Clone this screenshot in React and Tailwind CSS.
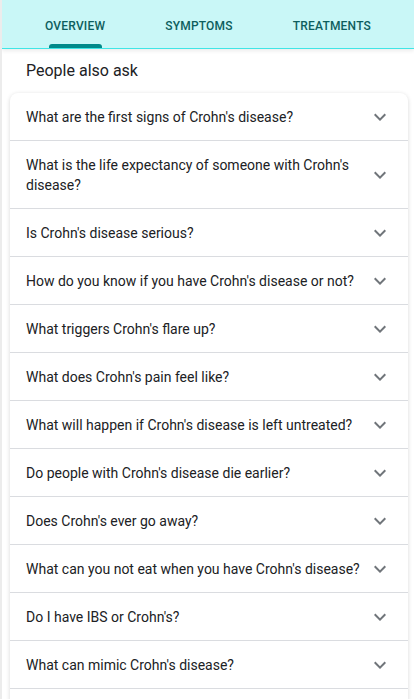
import React from "react";

const questions = [
  "What are the first signs of Crohn's disease?",
  "What is the life expectancy of someone with Crohn's disease?",
  "Is Crohn's disease serious?",
  "How do you know if you have Crohn's disease or not?",
  "What triggers Crohn's flare up?",
  "What does Crohn's pain feel like?",
  "What will happen if Crohn's disease is left untreated?",
  "Do people with Crohn's disease die earlier?",
  "Does Crohn's ever go away?",
  "What can you not eat when you have Crohn's disease?",
  "Do I have IBS or Crohn's?",
  "What can mimic Crohn's disease?",
  "Can Crohn's disease be cured?",
];

function Chevron() {
  return (
    <svg width="24" height="20" viewBox="0 2 24 20" className="shrink-0 fill-[#70757a]">
      <path d="M16.59 8.59L12 13.17 7.41 8.59 6 10l6 6 6-6z" />
    </svg>
  );
}

export default function App() {
  return (
    <div className="min-h-screen bg-white font-['Roboto',_'Liberation_Sans',_sans-serif] border-l-2 border-[#ececec] overflow-hidden">
      {/* Tabs */}
      <div className="h-[49px] bg-[#c9f7f7] border-b border-[#3fe6e6] shadow-[0_2px_4px_rgba(0,0,0,0.08)] flex pl-[13px] relative z-10">
        {["OVERVIEW", "SYMPTOMS", "TREATMENTS"].map((t, i) => (
          <div key={t} className="px-[30px] flex flex-col items-center justify-end">
            <span className="text-[12px] font-medium tracking-[0.2px] text-[#0d5e5e] leading-none mb-[12px]">
              {t}
            </span>
            <div
              className={`h-[4px] w-[53px] rounded-t-[3px] ${
                i === 0 ? "bg-[#00898a]" : "bg-transparent"
              }`}
            />
          </div>
        ))}
      </div>

      {/* People also ask */}
      <div className="px-[24px] pt-[10px] pb-[10px] text-[16px] leading-[24px] text-[#202124]">
        People also ask
      </div>

      <div className="ml-[8px] mr-[6px] bg-white rounded-[8px] shadow-[0_1px_4px_rgba(0,0,0,0.16)]">
        {questions.map((q, i) => (
          <div
            key={q}
            className={`flex items-center justify-between pl-[16px] pr-[16px] pt-[14px] pb-[13px] ${
              i > 0 ? "border-t border-[#dadce0]" : ""
            }`}
          >
            <span className="flex-1 min-w-0 text-[14px] leading-[20px] text-[#202124] pr-[8px]">{q}</span>
            <Chevron />
          </div>
        ))}
      </div>
    </div>
  );
}
